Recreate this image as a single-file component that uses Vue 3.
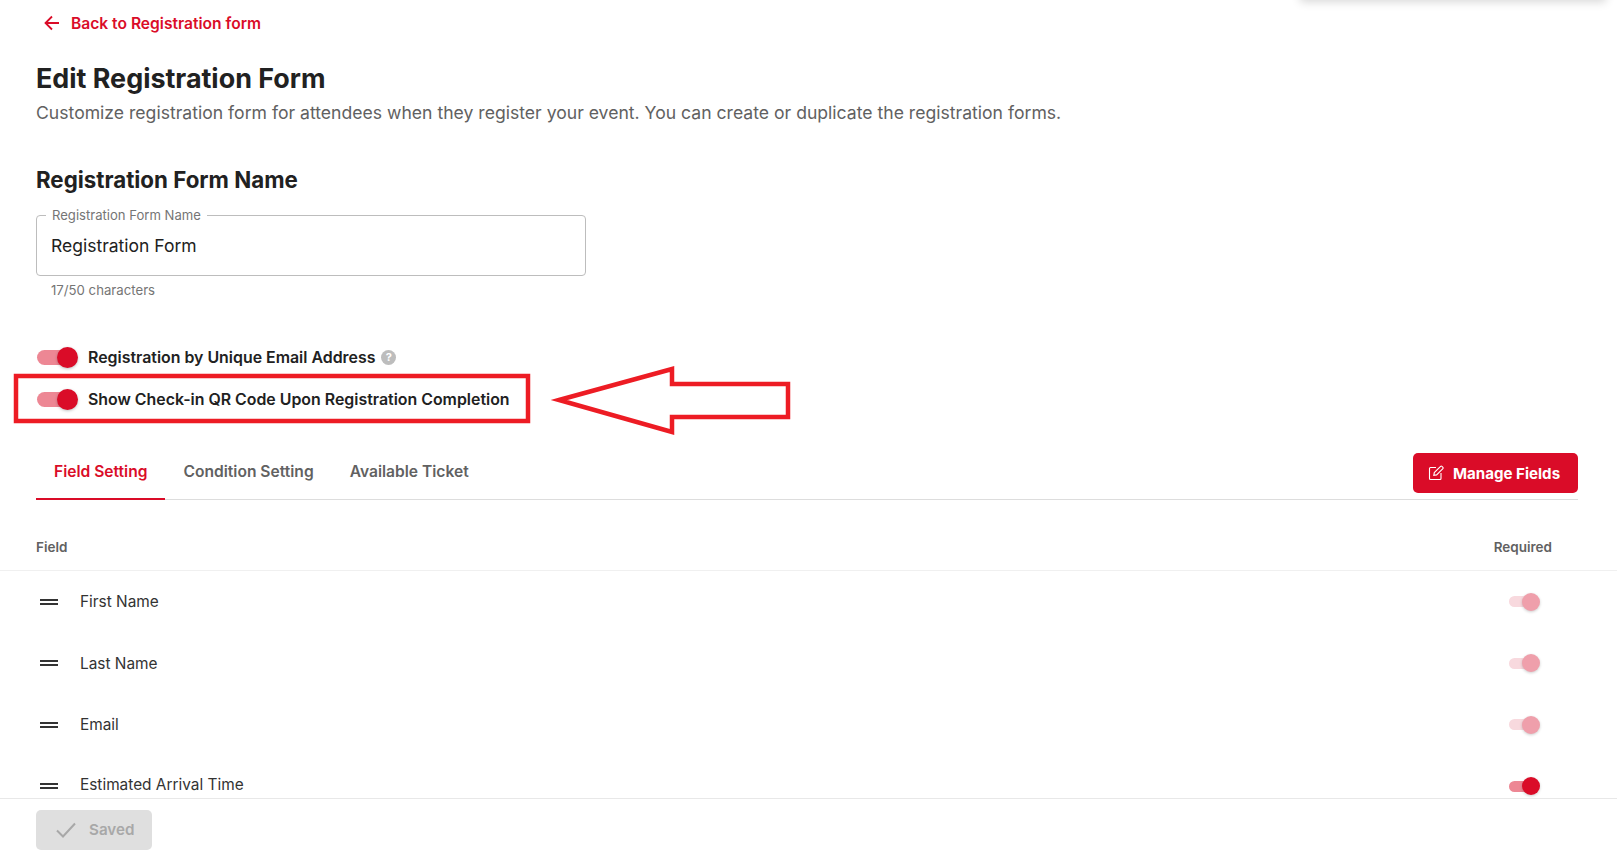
<script setup>
const fields = [
  { name: 'First Name', locked: true },
  { name: 'Last Name', locked: true },
  { name: 'Email', locked: true },
  { name: 'Estimated Arrival Time', locked: false, raised: true }
]
</script>

<template>
  <div class="page">
    <div class="corner-popover"></div>

    <main class="content">
      <a class="back">
        <svg width="16" height="16" viewBox="0 0 16 16" fill="none" stroke="#DA0C28" stroke-width="1.8">
          <path d="M15 8H1.500M8 1.500L1.500 8L8 14.500" />
        </svg>
        <span>Back to Registration form</span>
      </a>

      <h1>Edit Registration Form</h1>
      <p class="sub">Customize registration form for attendees when they register your event. You can create or duplicate the registration forms.</p>

      <h2>Registration Form Name</h2>
      <fieldset class="field">
        <legend>Registration Form Name</legend>
        <div class="value">Registration Form</div>
      </fieldset>
      <div class="helper">17/50 characters</div>

      <div class="switch-row first">
        <span class="toggle"><i></i></span>
        <span class="switch-label">Registration by Unique Email Address</span>
        <span class="help">?</span>
      </div>
      <div class="switch-row">
        <span class="toggle"><i></i></span>
        <span class="switch-label">Show Check-in QR Code Upon Registration Completion</span>
      </div>

      <div class="tabs">
        <div class="tab active">Field Setting</div>
        <div class="tab">Condition Setting</div>
        <div class="tab">Available Ticket</div>
        <button class="manage">
          <svg width="16" height="16" viewBox="0 0 16 16" fill="none" stroke="#fff" stroke-width="1.1">
            <path d="M8 2.500H2.500A1 1 0 0 0 1.500 3.500V13.500A1 1 0 0 0 2.500 14.500H12A1 1 0 0 0 13 13.500V8" />
            <path d="M5.800 10.400L6.300 7.600L12.600 1.300A.9.9 0 0 1 13.900 1.300L14.900 2.300A.9.9 0 0 1 14.900 3.600L8.600 9.900Z" />
          </svg>
          Manage Fields
        </button>
      </div>
    </main>

    <div class="table-head">
      <span>Field</span>
      <span>Required</span>
    </div>

    <div v-for="f in fields" :key="f.name" class="row">
      <span class="handle"></span>
      <span class="name" :class="{ raised: f.raised }">{{ f.name }}</span>
      <span class="mini" :class="{ locked: f.locked }"><i></i></span>
    </div>

    <footer class="footer">
      <button class="saved">
        <svg width="20" height="16" viewBox="0 0 20 16" fill="none" stroke="#A8A8A8" stroke-width="2">
          <path d="M1 8.500L7 14.500L19 1.500" />
        </svg>
        <span>Saved</span>
      </button>
    </footer>

    <svg class="annotation" width="800" height="100" viewBox="0 0 800 100" fill="none" stroke="#ED1C24">
      <rect x="16" y="7" width="512" height="45" stroke-width="4.500" />
      <path d="M559 31L672 0V15H788V48H672V63Z" stroke-width="4.500" />
    </svg>
  </div>
</template>

<style>
html, body { margin: 0; background: #fff; }
</style>

<style scoped>
.page {
  position: relative;
  width: 1617px;
  height: 852px;
  overflow: hidden;
  background: #fff;
  font-family: Inter, "Noto Sans", sans-serif;
  color: #212121;
}
.corner-popover {
  position: absolute;
  top: -20px;
  left: 1300px;
  width: 306px;
  height: 20px;
  box-shadow: 0 2px 10px rgba(0, 0, 0, 0.16);
}
.content { padding: 0 39px 0 36px; }
.back {
  display: flex;
  align-items: center;
  gap: 11px;
  height: 46px;
  padding-left: 8px;
  color: #DA0C28;
  font-size: 15.600px;
  font-weight: 600;
}
h1 {
  margin: 17px 0 0;
  font-size: 26.900px;
  line-height: 30px;
  font-weight: 700;
}
.sub {
  margin: 9px 0 0;
  font-size: 17.600px;
  line-height: 22px;
  color: #616161;
}
h2 {
  margin: 42px 0 0;
  font-size: 22.300px;
  line-height: 28px;
  font-weight: 700;
}
.field {
  box-sizing: border-box;
  width: 550px;
  height: 68px;
  margin: 14px 0 0;
  padding: 0 14px;
  border: 1px solid #BDBDBD;
  border-radius: 4px;
}
.field legend {
  margin-left: -5px;
  padding: 0 6px;
  font-size: 13.100px;
  line-height: 14px;
  color: #757575;
}
.value {
  font-size: 17.500px;
  line-height: 22px;
  margin-top: 13px;
  color: #212121;
}
.helper {
  margin: 6px 0 0 15px;
  font-size: 13.200px;
  line-height: 16px;
  color: #757575;
}
.switch-row {
  display: flex;
  align-items: center;
  height: 42px;
}
.switch-row.first { margin-top: 38px; }
.toggle {
  position: relative;
  display: block;
  flex: none;
  width: 38px;
  height: 15px;
  margin: 0 0 0 1px;
  border-radius: 8px;
  background: #ED8794;
}
.toggle i {
  position: absolute;
  right: -3px;
  top: -3px;
  width: 21px;
  height: 21px;
  border-radius: 50%;
  background: #DA0C28;
  box-shadow: 0 1px 3px rgba(0, 0, 0, 0.25);
}
.switch-label {
  margin-left: 13px;
  font-size: 15.900px;
  font-weight: 600;
}
.help {
  width: 15px;
  height: 15px;
  margin-left: 6px;
  border-radius: 50%;
  background: #BDBDBD;
  color: #fff;
  font-size: 11px;
  font-weight: 700;
  line-height: 15px;
  text-align: center;
}
.tabs {
  display: flex;
  align-items: stretch;
  height: 59px;
  margin-top: 20px;
  border-bottom: 1px solid #DDD;
}
.tab {
  display: flex;
  align-items: center;
  box-sizing: border-box;
  padding: 3px 18px 0;
  margin-bottom: -1px;
  font-size: 15.600px;
  font-weight: 600;
  color: #616161;
}
.tab.active {
  padding-top: 5px;
  color: #DA0C28;
  border-bottom: 2px solid #DA0C28;
}
.manage {
  display: flex;
  align-items: center;
  gap: 9px;
  align-self: flex-start;
  box-sizing: border-box;
  width: 165px;
  height: 40px;
  margin: 13px 0 0 auto;
  padding: 0 0 0 15px;
  border: 0;
  border-radius: 5px;
  background: #DA0C28;
  color: #fff;
  font-family: inherit;
  font-size: 15.100px;
  font-weight: 700;
}
.table-head {
  display: flex;
  align-items: center;
  justify-content: space-between;
  box-sizing: border-box;
  height: 71px;
  padding: 24px 65px 0 36px;
  border-bottom: 1px solid #F0F0F0;
  font-size: 13.500px;
  font-weight: 600;
  color: #616161;
}
.row {
  display: flex;
  align-items: center;
  height: 61.500px;
  padding-left: 40px;
}
.handle {
  box-sizing: border-box;
  width: 18px;
  height: 6px;
  border-top: 2px solid #333;
  border-bottom: 2px solid #333;
}
.name {
  margin-left: 22px;
  font-size: 15.400px;
  color: #333;
}
.name.raised { margin-bottom: 4px; }
.mini {
  position: relative;
  width: 24px;
  height: 11px;
  margin: 0 84px 0 auto;
  border-radius: 6px;
  background: #ED8794;
}
.mini i {
  position: absolute;
  right: -7px;
  top: -3.500px;
  width: 18px;
  height: 18px;
  border-radius: 50%;
  background: #DA0C28;
  box-shadow: 0 1px 3px rgba(0, 0, 0, 0.2);
}
.mini.locked { background: #F8D9DE; }
.mini.locked i { background: #EF9FAB; }
.footer {
  position: absolute;
  left: 0;
  right: 0;
  bottom: 0;
  height: 54px;
  box-sizing: border-box;
  padding: 11px 0 0 36px;
  background: #fff;
  border-top: 1px solid #E8E8E8;
}
.saved {
  display: flex;
  align-items: center;
  gap: 13px;
  box-sizing: border-box;
  width: 116px;
  height: 40px;
  padding: 0 0 0 20px;
  border: 0;
  border-radius: 5px;
  background: #DFDFDF;
  color: #A8A8A8;
  font-family: inherit;
  font-size: 15.200px;
  font-weight: 600;
}
.saved span { margin-bottom: 2px; }
.annotation {
  position: absolute;
  left: 0;
  top: 369px;
  overflow: visible;
  pointer-events: none;
}
</style>
